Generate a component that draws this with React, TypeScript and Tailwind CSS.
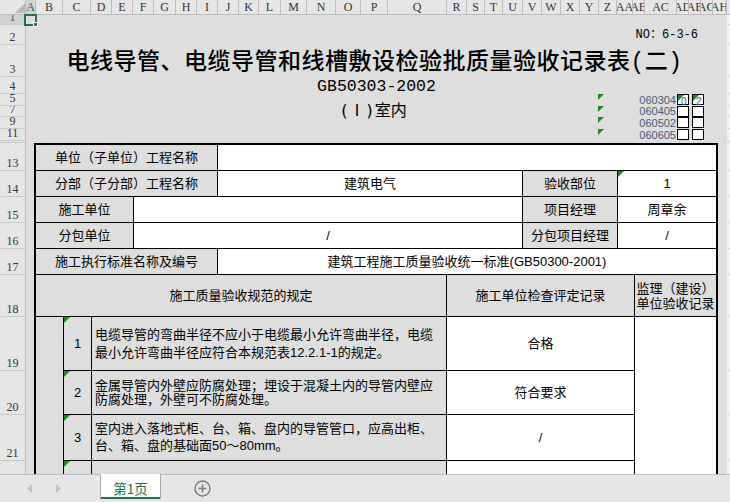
import React from "react";

const SANS = "font-['Liberation_Sans','Noto_Sans_CJK_SC',sans-serif]";
const HEAD = "font-['Liberation_Serif','Noto_Sans_CJK_SC',serif]";

const COLS: [string, string][] = [
  ["A", "w-[10px]"], ["B", "w-[27px]"], ["C", "w-[28px]"], ["D", "w-[21px]"],
  ["E", "w-[21px]"], ["F", "w-[21px]"], ["G", "w-[22px]"], ["H", "w-[21px]"],
  ["I", "w-[21px]"], ["J", "w-[21px]"], ["K", "w-[20px]"], ["L", "w-[22px]"],
  ["M", "w-[26px]"], ["N", "w-[29px]"], ["O", "w-[25px]"], ["P", "w-[27px]"],
  ["Q", "w-[59px]"], ["R", "w-[20px]"], ["S", "w-[18px]"], ["T", "w-[18px]"],
  ["U", "w-[20px]"], ["V", "w-[19px]"], ["W", "w-[19px]"], ["X", "w-[19px]"],
  ["Y", "w-[19px]"], ["Z", "w-[18px]"], ["AA", "w-[16px]"], ["AB", "w-[12px]"],
  ["AC", "w-[32px]"], ["AD", "w-[12px]"], ["AE", "w-[12px]"], ["AG", "w-[12px]"],
  ["AH", "w-[14px]"], ["AI", "w-[20px]"],
];

const ROWS: [string, string][] = [
  ["1", "h-[10px]"], ["2", "h-[20px]"], ["3", "h-[32px]"], ["4", "h-[17px]"],
  ["5", "h-[12px]"], ["7", "h-[11px]"], ["9", "h-[12px]"], ["11", "h-[12px]"],
  ["12", "h-[2px]"], ["13", "h-[28px]"], ["14", "h-[26px]"], ["15", "h-[26px]"],
  ["16", "h-[26px]"], ["17", "h-[26px]"], ["18", "h-[42px]"], ["19", "h-[54px]"],
  ["20", "h-[44px]"], ["21", "h-[46px]"], ["22", "h-[40px]"],
];

const CODES = ["060304", "060405", "060502", "060605"];
const CODE_ROWS = ["h-[12px]", "h-[11px]", "h-[12px]", "h-[12px]"];

// green "error indicator" corner, like Excel draws
function Flag() {
  return (
    <span className="absolute left-0 top-0 h-0 w-0 border-t-[6px] border-r-[6px] border-t-[#1d8a1d] border-r-transparent" />
  );
}

function ColHeader() {
  return (
    <div className={`flex h-[15px] shrink-0 border-b border-[#bdbdbd] bg-[#e6e6e6] ${HEAD} text-[12px] text-[#333]`}>
      <div className="relative w-[26px] shrink-0 border-r border-[#bdbdbd]">
        <span className="absolute right-0 bottom-[1px] h-0 w-0 border-b-[10px] border-l-[10px] border-b-[#b8b8b8] border-l-transparent" />
      </div>
      {COLS.map(([label, w]) => (
        <div
          key={label}
          className={`${w} shrink-0 flex items-center justify-center overflow-hidden whitespace-nowrap border-r border-[#bdbdbd] leading-none ${
            label === "A" ? "bg-[#d3d3d3] text-[#217346]" : ""
          }`}
        >
          {label}
        </div>
      ))}
    </div>
  );
}

function RowHeader() {
  return (
    <div className={`w-[26px] shrink-0 flex flex-col border-r border-[#bdbdbd] bg-[#e6e6e6] ${HEAD} text-[12px] text-[#333]`}>
      {ROWS.map(([label, h]) => (
        <div
          key={label}
          className={`${h} shrink-0 flex items-end justify-center overflow-hidden border-b border-[#c8c8c8] leading-[13px] ${
            label === "1" ? "bg-[#d3d3d3] text-[#217346]" : ""
          }`}
        >
          {label}
        </div>
      ))}
    </div>
  );
}

function RightStrip() {
  return (
    <div className="flex-1 flex flex-col bg-[#f3f3f3]">
      {ROWS.map(([label, h]) => (
        <div key={label} className={`${h} shrink-0 border-b border-[#d6d6d6]`} />
      ))}
    </div>
  );
}

function CodeList() {
  return (
    <div className={`[grid-area:1/1] justify-self-start ml-[572px] flex flex-col ${SANS}`}>
      {CODES.map((code, i) => (
        <div key={code} className={`${CODE_ROWS[i]} flex`}>
          <div className="relative w-[78px] flex items-center justify-end text-[11px] leading-none text-[#4a5a78]">
            <Flag />
            {code}
          </div>
          <div className="relative ml-[1px] h-[11px] w-[12px] border border-black bg-white text-[10px] leading-none text-[#4a5a78]">
            {i === 0 && (
              <>
                <Flag />
                <span className="absolute left-[3px] top-[2px]">0</span>
              </>
            )}
          </div>
          <div className="relative ml-[3px] h-[11px] w-[12px] border border-black bg-white text-[10px] leading-none text-[#4a5a78]">
            {i === 0 && (
              <>
                <Flag />
                <span className="absolute left-[3px] top-[2px]">2</span>
              </>
            )}
          </div>
        </div>
      ))}
    </div>
  );
}

function Head() {
  return (
    <>
      <div className="h-[10px] shrink-0" />
      <div className="h-[20px] shrink-0 flex items-center justify-end pr-[29px] font-['Liberation_Mono','Noto_Sans_CJK_SC',monospace] text-[12px] leading-none">
        NO：6-3-6
      </div>
      <div className="h-[32px] shrink-0 flex items-center justify-center pt-[4px] pr-[4px] font-['Liberation_Mono','Noto_Sans_CJK_SC',monospace] text-[23px] font-medium leading-none tracking-[0.5px] whitespace-nowrap">
        电线导管、电缆导管和线槽敷设检验批质量验收记录表(二)
      </div>
      <div className="h-[17px] shrink-0 flex items-center justify-center pt-[3px] font-['Liberation_Mono',monospace] text-[16.5px] leading-none">
        GB50303-2002
      </div>
      <div className="h-[47px] shrink-0 grid">
        <div className="[grid-area:1/1] justify-self-center self-start mt-[9px] mr-[7px] font-['DejaVu_Sans_Mono','Noto_Sans_CJK_SC',monospace] text-[16px] leading-[16px] whitespace-nowrap">
          (Ⅰ)室内
        </div>
        <CodeList />
      </div>
      <div className="h-[2px] shrink-0" />
    </>
  );
}

const GRAY = "bg-[#dedede] flex items-center justify-center";
const WHITE = "bg-white flex items-center justify-center";

function Item({ n, lead, lines, result }: { n: string; lead: string; lines: string[]; result: string }) {
  return (
    <>
      <div className={`relative col-start-2 ${GRAY}`}>
        <Flag />
        {n}
      </div>
      <div className={`col-span-3 bg-[#dedede] flex flex-col justify-center pl-[3px] whitespace-nowrap ${lead}`}>
        {lines.map((l) => (
          <span key={l}>{l}</span>
        ))}
      </div>
      <div className={`col-span-3 ${WHITE}`}>{result}</div>
    </>
  );
}

function Table() {
  return (
    <div
      className={`ml-[8px] w-[684px] shrink-0 grid gap-px border-2 border-black bg-black grid-cols-[27px_27px_41px_83px_228px_75px_94px_16px_81px] grid-rows-[25px_25px_25px_25px_25px_41px_53px_43px_45px_40px] ${SANS} text-[13px] text-black`}
    >
      <div className={`col-span-4 ${GRAY}`}>单位（子单位）工程名称</div>
      <div className={`col-span-5 ${WHITE}`} />

      <div className={`col-span-4 ${GRAY}`}>分部（子分部）工程名称</div>
      <div className={`col-span-2 ${WHITE}`}>建筑电气</div>
      <div className={GRAY}>验收部位</div>
      <div className={`relative col-span-2 ${WHITE}`}>
        <Flag />1
      </div>

      <div className={`col-span-3 ${GRAY}`}>施工单位</div>
      <div className={`col-span-3 ${WHITE}`} />
      <div className={GRAY}>项目经理</div>
      <div className={`col-span-2 ${WHITE}`}>周章余</div>

      <div className={`col-span-3 ${GRAY}`}>分包单位</div>
      <div className={`col-span-3 ${WHITE}`}>/</div>
      <div className={GRAY}>分包项目经理</div>
      <div className={`col-span-2 ${WHITE}`}>/</div>

      <div className={`col-span-4 ${GRAY}`}>施工执行标准名称及编号</div>
      <div className={`col-span-5 ${WHITE}`}>建筑工程施工质量验收统一标准(GB50300-2001)</div>

      <div className={`col-span-5 ${GRAY}`}>施工质量验收规范的规定</div>
      <div className={`col-span-3 ${GRAY}`}>施工单位检查评定记录</div>
      <div className="bg-[#dedede] flex flex-col justify-center items-center leading-[15px] whitespace-nowrap">
        <span>监理（建设）</span>
        <span>单位验收记录</span>
      </div>

      <div className="row-span-4 bg-[#dedede]" />
      <Item
        n="1"
        lead="leading-[18px]"
        lines={["电缆导管的弯曲半径不应小于电缆最小允许弯曲半径，电缆", "最小允许弯曲半径应符合本规范表12.2.1-1的规定。"]}
        result="合格"
      />
      <div className="row-span-4 bg-white" />
      <Item
        n="2"
        lead="leading-[13.5px]"
        lines={["金属导管内外壁应防腐处理；埋设于混凝土内的导管内壁应", "防腐处理，外壁可不防腐处理。"]}
        result="符合要求"
      />
      <Item
        n="3"
        lead="leading-[16.5px]"
        lines={["室内进入落地式柜、台、箱、盘内的导管管口，应高出柜、", "台、箱、盘的基础面50～80mm。"]}
        result="/"
      />
      <div className={`relative col-start-2 ${GRAY}`}>
        <Flag />
      </div>
      <div className="col-span-3 bg-[#dedede]" />
      <div className="col-span-3 bg-white" />
    </div>
  );
}

function TabBar() {
  return (
    <div className="h-[28px] shrink-0 flex border-t border-[#bdbdbd] bg-[#e6e6e6]">
      <div className="w-[100px] shrink-0 flex items-center">
        <svg className="ml-[27px]" width="6" height="9" viewBox="0 0 6 9">
          <polygon points="5,0 5,9 0,4.5" fill="#c2c2c2" />
        </svg>
        <svg className="ml-[23px]" width="6" height="9" viewBox="0 0 6 9">
          <polygon points="0,0 0,9 5,4.5" fill="#c2c2c2" />
        </svg>
      </div>
      <div className="w-[61px] shrink-0 flex flex-col h-[25px] -mt-px bg-white border-x border-[#a8a8a8]">
        <div className="flex-1 flex items-center justify-center pt-[6px] font-['Noto_Sans_CJK_SC',sans-serif] text-[13.5px] leading-none text-[#217346]">
          第1页
        </div>
        <div className="h-[2px] bg-[#217346]" />
      </div>
      <div className="ml-[33px] flex items-center">
        <svg width="17" height="17" viewBox="0 0 17 17">
          <circle cx="8.5" cy="8.5" r="7.5" fill="none" stroke="#7b7b7b" strokeWidth="1.4" />
          <path d="M8.5 4.5v8M4.5 8.5h8" stroke="#7b7b7b" strokeWidth="1.6" />
        </svg>
      </div>
    </div>
  );
}

export default function App() {
  return (
    <div className="relative w-[730px] h-[502px] overflow-hidden flex flex-col bg-[#dedede]">
      <ColHeader />
      <div className="flex h-[459px] shrink-0 overflow-hidden">
        <RowHeader />
        <div className="w-[701px] shrink-0 flex flex-col overflow-hidden">
          <Head />
          <Table />
        </div>
        <RightStrip />
      </div>
      <TabBar />
      {/* active cell A1 */}
      <div className="absolute left-[24px] top-[14px] w-[13px] h-[12px] border-2 border-[#217346]" />
      <div className="absolute left-[33px] top-[22px] w-[5px] h-[5px] bg-[#217346] border border-white" />
    </div>
  );
}
